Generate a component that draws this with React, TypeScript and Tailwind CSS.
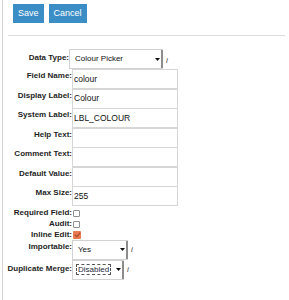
const labelBase = "shrink-0 text-right font-bold text-[8px] leading-[9px] text-[#1e1e1e] whitespace-nowrap"

function Info() {
  return <span className="ml-[3px] italic text-[8px] leading-[9px] text-[#444]">i</span>
}

function Arrow() {
  return (
    <svg width="5" height="3" viewBox="0 0 5 3" className="block">
      <path d="M0 0h5L2.5 3z" fill="#111" />
    </svg>
  )
}

function Select({ value, width, focused }: { value: string; width: string; focused?: boolean }) {
  return (
    <div className={`flex h-[20px] ${width} items-stretch border border-[#d2d2d2] border-r-0 bg-white`}>
      <div className="flex min-w-0 flex-1 items-center overflow-hidden pl-[3px]">
        {focused ? (
          <span className="border border-dashed border-[#555] px-[1px] text-[8px] leading-[9px] text-[#1d2838]">{value}</span>
        ) : (
          <span className="pl-[2px] text-[8px] text-[#111]">{value}</span>
        )}
      </div>
      <div className="flex w-[8px] shrink-0 items-center justify-start border-r-2 border-r-[#8c8c8c]">
        <Arrow />
      </div>
    </div>
  )
}

function TextRow({ label, value }: { label: string; value?: string }) {
  return (
    <div className="flex h-[19.5px]">
      <div className={`${labelBase} w-[69px] pt-[2px]`}>{label}</div>
      <div className="flex h-[20px] w-[106px] items-center border border-[#d6d6d6] bg-white pl-[1px] text-[8.5px] text-[#111]">
        {value}
      </div>
    </div>
  )
}

function CheckRow({ label, checked }: { label: string; checked?: boolean }) {
  return (
    <div className="flex h-[11px]">
      <div className={`${labelBase} w-[69px] pt-[1px]`}>{label}</div>
      {checked ? (
        <div className="ml-[1px] mt-[2px] flex h-[8px] w-[8px] items-center justify-center rounded-[1px] bg-[#e9794f]">
          <svg width="7" height="6" viewBox="0 0 7 6">
            <path d="M0.8 2.6 L2.8 4.6 L6.2 0.8" stroke="#a8472a" strokeWidth="1.1" fill="none" />
          </svg>
        </div>
      ) : (
        <div className="ml-[1px] mt-[3px] h-[7px] w-[7px] rounded-[1px] border border-[#8f8f8f] bg-white" />
      )}
    </div>
  )
}

export default function App() {
  return (
    <div className="h-[300px] w-[289px] overflow-hidden bg-white font-['Liberation_Sans',Arial,sans-serif]">
      <div className="ml-[2px] h-full border-l border-[#d3d3d3] pt-[4px]">
        <div className="flex gap-[5px] pl-[10px]">
          <button className="h-[19px] bg-[#3b8ec5] px-[5px] text-[9px] text-white">Save</button>
          <button className="h-[19px] bg-[#3b8ec5] px-[5px] text-[9px] text-white">Cancel</button>
        </div>
        <div className="ml-[5px] mr-[4px] mt-[12px] h-px bg-[#dcdcdc]" />

        <div className="mt-[13px]">
          <div className="flex h-[20px] items-start">
            <div className={`${labelBase} w-[66px] pt-[4px]`}>Data Type:</div>
            <Select value="Colour Picker" width="w-[94px]" />
            <div className="flex h-full items-center pt-[3px]">
              <Info />
            </div>
          </div>

          <TextRow label="Field Name:" value="colour" />
          <TextRow label="Display Label:" value="Colour" />
          <TextRow label="System Label:" value="LBL_COLOUR" />
          <TextRow label="Help Text:" />
          <TextRow label="Comment Text:" />
          <TextRow label="Default Value:" />
          <TextRow label="Max Size:" value="255" />

          <div className="mt-[1px]" />
          <CheckRow label="Required Field:" />
          <CheckRow label="Audit:" />
          <CheckRow label="Inline Edit:" checked />

          <div className="flex h-[20px] items-start">
            <div className={`${labelBase} w-[69px] pt-[2px]`}>Importable:</div>
            <Select value="Yes" width="w-[56px]" />
            <div className="flex h-full items-center">
              <Info />
            </div>
          </div>

          <div className="flex h-[20px] items-start">
            <div className={`${labelBase} w-[69px] pt-[4px]`}>Duplicate Merge:</div>
            <Select value="Disabled" width="w-[52px]" focused />
            <div className="flex h-full items-center">
              <Info />
            </div>
          </div>
        </div>
      </div>
    </div>
  )
}
